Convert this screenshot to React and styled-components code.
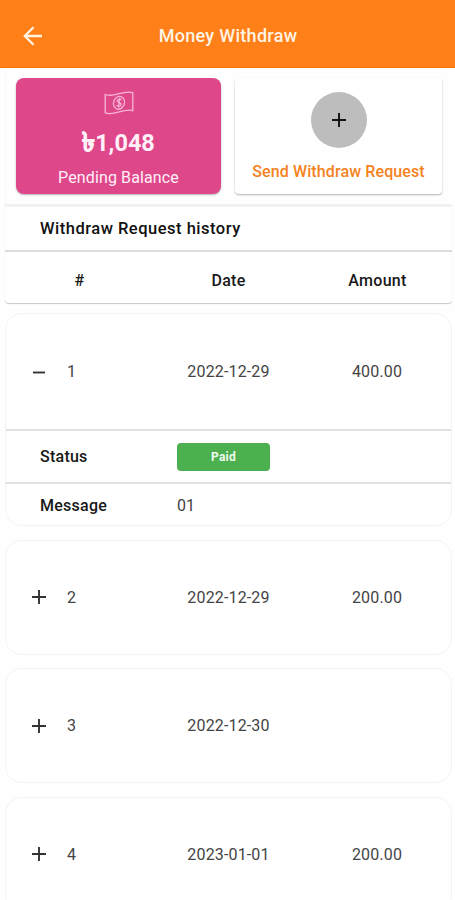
import React from "react";
import styled, { createGlobalStyle } from "styled-components";

const GlobalStyle = createGlobalStyle`
  * {
    box-sizing: border-box;
  }
  body {
    margin: 0;
    background-color: #fefefe;
    font-family: Roboto, "Liberation Sans", sans-serif;
    font-size: 16px;
    color: #444;
  }
`;

const Page = styled.div`
  display: flex;
  flex-direction: column;
  width: 100%;
  height: 900px;
  overflow: hidden;
`;

const Header = styled.header`
  display: grid;
  grid-template-columns: 48px 1fr 48px;
  align-items: center;
  flex-shrink: 0;
  height: 68px;
  padding: 5px 8px 0 9px;
  background-color: #ff8018;
  border-bottom: 1px solid #f77400;
`;

const BackButton = styled.button`
  display: flex;
  justify-content: center;
  align-items: center;
  height: 48px;
  padding: 0;
  border: 0;
  background: none;
`;

const Title = styled.h1`
  margin: 0;
  font-size: 18px;
  font-weight: 500;
  line-height: 22px;
  letter-spacing: 0.3px;
  text-align: center;
  color: #fff3e4;
`;

const Summary = styled.section`
  display: grid;
  grid-template-columns: 205px 207px;
  gap: 14px;
  flex-shrink: 0;
  height: 136px;
  margin: 0 3px 0 5px;
  padding: 10px 0 0 10px;
  border-left: 1px solid #f7f8f8;
`;

const SummaryCard = styled.div`
  display: flex;
  flex-direction: column;
  align-items: center;
  height: 116px;
  padding-top: ${(props) => props.$top};
  border-radius: ${(props) => props.$radius};
  background-color: ${(props) => props.$bg};
  color: ${(props) => props.$color};
  box-shadow: 0 1px 2px rgba(0, 0, 0, 0.3);
`;

const Balance = styled.strong`
  margin-top: 14px;
  font-size: 23.5px;
  font-weight: 700;
  line-height: 28px;
  letter-spacing: 0;
`;

const Currency = styled.span`
  font-size: 26px;
  line-height: 20px;
  -webkit-text-stroke: 0.8px currentColor;
`;

const CardLabel = styled.span`
  margin-top: ${(props) => props.$gap};
  font-size: 16px;
  font-weight: ${(props) => props.$weight};
  line-height: 20px;
  letter-spacing: 0.12px;
`;

const PlusCircle = styled.div`
  display: flex;
  justify-content: center;
  align-items: center;
  width: 56px;
  height: 56px;
  border-radius: 50%;
  background-color: #bdbdbd;
`;

const History = styled.section`
  flex-shrink: 0;
  height: 99px;
  margin: 0 3px 0 5px;
  border-top: 3px solid #f0f1f1;
  border-radius: 0 0 4px 4px;
  background-color: white;
  box-shadow: 0 1px 1px rgba(0, 0, 0, 0.22);
`;

const HistoryTitle = styled.h2`
  height: 45px;
  margin: 0;
  padding-left: 35px;
  border-bottom: 2px solid #dcdcdc;
  font-size: 16.5px;
  font-weight: 500;
  line-height: 43px;
  letter-spacing: 0.5px;
  color: #111;
`;

const Columns = styled.div`
  display: grid;
  grid-template-columns: repeat(3, 1fr);
  align-items: center;
  height: 51px;
  padding-top: 5px;
  font-weight: 500;
  letter-spacing: 0.3px;
  text-align: center;
  color: #181818;
`;

const List = styled.main`
  display: flex;
  flex-direction: column;
  gap: 13.5px;
  margin: 10px 3px 0 5px;
`;

const Card = styled.article`
  flex-shrink: 0;
  border: 1px solid #f3f3f3;
  border-radius: 17px;
  background-color: white;
`;

const Row = styled.div`
  display: grid;
  grid-template-columns: 148px 149px 1fr;
  align-items: center;
  height: ${(props) => (props.$open ? "115px" : "113px")};
  letter-spacing: 0.15px;
  text-align: center;
`;

const RowNumber = styled.span`
  display: flex;
  align-items: center;
  gap: 21px;
  padding-left: 26px;
`;

const Detail = styled.div`
  display: grid;
  grid-template-columns: 137px 1fr;
  align-items: center;
  height: ${(props) => props.$height};
  padding-top: ${(props) => props.$top};
  padding-left: 34px;
  border-top: 2px solid #e1e1e1;
`;

const DetailName = styled.span`
  font-weight: 500;
  letter-spacing: 0.25px;
  color: #181818;
`;

const Badge = styled.span`
  width: 93px;
  height: 28px;
  border-radius: 4px;
  background-color: #4caf50;
  font-size: 12px;
  font-weight: 700;
  line-height: 28px;
  letter-spacing: 0.2px;
  text-align: center;
  color: #eefbee;
`;

function ArrowIcon() {
  return (
    <svg width="20" height="20" viewBox="0 0 20 20" fill="none" stroke="#fff3e4" strokeWidth="2.3">
      <path d="M19 10H2M10.5 1.3 1.8 10l8.7 8.7" />
    </svg>
  );
}

function BanknoteIcon() {
  return (
    <svg width="30" height="24" viewBox="0 0 30 24" fill="none" stroke="#f8b4d4" strokeWidth="1.3">
      <path d="M1.2 3.5c9 3.6 18.5-5.1 27.6-1.8v18c-9-3-18.5 5.6-27.6 2.2z" />
      <ellipse cx="15" cy="11.8" rx="5.4" ry="6.6" transform="rotate(18 15 11.8)" />
      <path d="M17.4 9c-1.1-1.5-4.5-.8-4.2 1.2.3 1.8 4 1 4 3.1 0 2.2-3.4 2.5-4.6.9M15.7 6.8l-1.2 10" />
    </svg>
  );
}

function ToggleIcon({ open, color = "#333" }) {
  return (
    <svg width="14" height="14" viewBox="0 0 14 14" stroke={color} strokeWidth="1.9">
      <path d={open ? "M1 7.5h12" : "M0 7h14M7 0v14"} />
    </svg>
  );
}

const requests = [
  { id: 1, date: "2022-12-29", amount: "400.00", status: "Paid", message: "01" },
  { id: 2, date: "2022-12-29", amount: "200.00" },
  { id: 3, date: "2022-12-30", amount: "" },
  { id: 4, date: "2023-01-01", amount: "200.00" },
];

function RequestCard({ request }) {
  const open = Boolean(request.status);
  return (
    <Card>
      <Row $open={open}>
        <RowNumber>
          <ToggleIcon open={open} />
          {request.id}
        </RowNumber>
        <span>{request.date}</span>
        <span>{request.amount}</span>
      </Row>
      {open && (
        <>
          <Detail $height="53px" $top="0">
            <DetailName>Status</DetailName>
            <Badge>{request.status}</Badge>
          </Detail>
          <Detail $height="43px" $top="2px">
            <DetailName>Message</DetailName>
            <span>{request.message}</span>
          </Detail>
        </>
      )}
    </Card>
  );
}

export default function App() {
  return (
    <Page>
      <GlobalStyle />
      <Header>
        <BackButton aria-label="Back">
          <ArrowIcon />
        </BackButton>
        <Title>Money Withdraw</Title>
      </Header>
      <Summary>
        <SummaryCard $bg="#df478b" $color="#fff0f7" $radius="8px" $top="13px">
          <BanknoteIcon />
          <Balance>
            <Currency>৳</Currency>1,048
          </Balance>
          <CardLabel $gap="11px" $weight="400">
            Pending Balance
          </CardLabel>
        </SummaryCard>
        <SummaryCard $bg="white" $color="#f58220" $radius="4px" $top="14px">
          <PlusCircle>
            <ToggleIcon color="#111" />
          </PlusCircle>
          <CardLabel $gap="14px" $weight="500">
            Send Withdraw Request
          </CardLabel>
        </SummaryCard>
      </Summary>
      <History>
        <HistoryTitle>Withdraw Request history</HistoryTitle>
        <Columns>
          <span>#</span>
          <span>Date</span>
          <span>Amount</span>
        </Columns>
      </History>
      <List>
        {requests.map((request) => (
          <RequestCard key={request.id} request={request} />
        ))}
      </List>
    </Page>
  );
}
